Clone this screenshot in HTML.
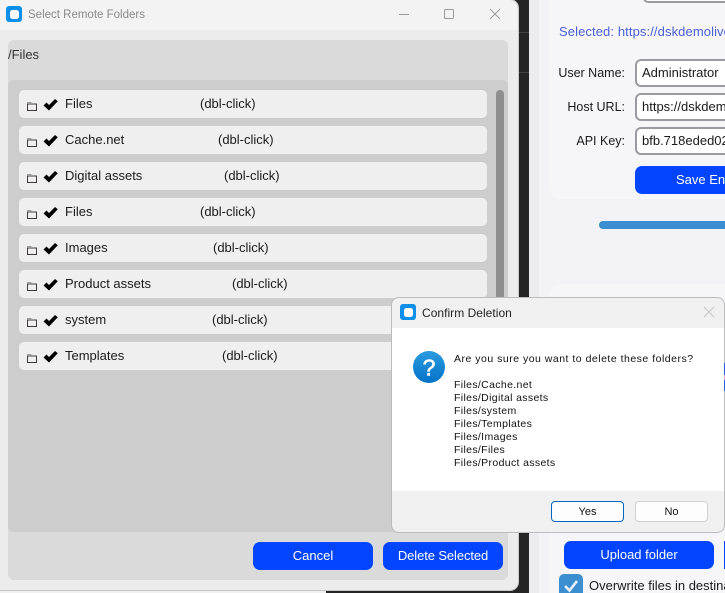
<!DOCTYPE html>
<html><head><meta charset="utf-8">
<style>
html,body{margin:0;padding:0;width:725px;height:593px;overflow:hidden;background:#252525;font-family:"Liberation Sans",sans-serif;font-size:13px;color:#1a1a1a}
#root{position:absolute;left:0;top:0;width:725px;height:593px;overflow:hidden;background:#252525}
#root div,#root span,#root svg{position:absolute;box-sizing:border-box}
.t{white-space:nowrap;line-height:16px}
.row{left:19px;width:468px;height:28px;background:#efefef;border-radius:5px}
.row .n{left:46px;top:6px}
.row .d{top:6px}
.row svg.f{left:8px;top:11px}
.row svg.c{left:24px;top:9px}
.blue{background:#0345ff;border-radius:7px;color:#fff;text-align:center;font-size:13px}
.inp{left:635px;width:100px;height:28px;background:#fff;border:2px solid #9a9ba0;border-radius:6px;padding:4px 5px;font-size:13px;line-height:15px;white-space:nowrap;overflow:hidden}
.lab{width:100px;left:525px;text-align:right;font-size:12.5px;line-height:16px}
.dl{left:454px;font-size:10.5px;line-height:13px;white-space:nowrap;color:#111}
</style></head><body>
<div id="root">

<!-- dark strip hairlines -->
<div style="left:518px;top:32px;width:11px;height:1px;background:#444"></div>
<div style="left:518px;top:72px;width:11px;height:1px;background:#444"></div>

<!-- right background window -->
<div style="left:529px;top:0;width:196px;height:593px;background:#ececf0"></div>
<div style="left:539px;top:0;width:186px;height:593px;background:#f2f2f7"></div>
<div style="left:549px;top:-10px;width:190px;height:209px;background:#f6f6f9;border-radius:12px"></div>
<div style="left:549px;top:284px;width:190px;height:320px;background:#f6f6f9;border-radius:12px"></div>
<div style="left:643px;top:-10px;width:100px;height:13px;background:#fff;border:2px solid #9a9ba0;border-radius:5px"></div>
<div class="t" style="left:559px;top:24px;color:#4a5fd8;font-size:13px;letter-spacing:.1px">Selected: https://dskdemolive</div>
<div class="lab" style="top:65px">User Name:</div>
<div class="lab" style="top:99px">Host URL:</div>
<div class="lab" style="top:133px">API Key:</div>
<div class="inp" style="top:59px">Administrator</div>
<div class="inp" style="top:93px">https://dskdemo</div>
<div class="inp" style="top:127px">bfb.718eded02</div>
<div class="blue" style="left:635px;top:166px;width:110px;height:28px;line-height:28px;padding-left:41px;text-align:left;white-space:nowrap">Save Env</div>
<div style="left:599px;top:221px;width:140px;height:8px;background:#3b8ed0;border-radius:4px"></div>
<div class="blue" style="left:564px;top:541px;width:150px;height:28px;line-height:27px">Upload folder</div>
<div style="left:724px;top:541px;width:1px;height:28px;background:#0345ff"></div>
<div style="left:559px;top:574px;width:24px;height:24px;background:#3b8ed0;border-radius:5px"></div>
<svg style="left:559px;top:574px" width="24" height="19"><path d="M6 12l4.500 4.500L18 7" fill="none" stroke="#e8f1f9" stroke-width="2.600"/></svg>
<div class="t" style="left:589px;top:578px;font-size:13px">Overwrite files in destina</div>

<!-- left window -->
<div style="left:0;top:590px;width:326px;height:3px;background:#f0f0f0"></div>
<div style="left:-2px;top:-1px;width:520.500px;height:592px;background:#ececec;border-radius:0 9px 9px 0;border:1px solid #c8c8c8"></div>
<div style="left:0;top:0;width:517px;height:30px;background:#f3f3f3;border-radius:0 9px 0 0"></div>
<svg style="left:6px;top:6px" width="16" height="16"><rect width="16" height="16" rx="3" fill="#0b8fe8"/><rect x="4" y="4" width="9" height="9" rx="2.500" fill="#fff"/></svg>
<div class="t" style="left:28px;top:7px;font-size:11.5px;color:#8a8a8a">Select Remote Folders</div>
<svg style="left:395px;top:4px" width="115" height="22" fill="none" stroke="#9a9a9a"><path d="M4 10.500h10"/><rect x="49.500" y="5.500" width="9" height="9" rx="1"/><path d="M95 5l10 10M105 5l-10 10"/></svg>

<div style="left:8px;top:40px;width:500px;height:540px;background:#dadada;border-radius:6px"></div>
<div class="t" style="left:8px;top:47px;font-size:13px;color:#333">/Files</div>
<div style="left:8px;top:80px;width:500px;height:452px;background:#cdcdcd;border-radius:6px"></div>
<div style="left:496px;top:90px;width:8px;height:300px;background:#8e8e8e;border-radius:4px"></div>

<div class="row" style="top:90px"><svg class="f" width="10" height="10" fill="none"><path d="M.5 3V9.500H9.500V3Z" stroke="#3f3a3a"/><path d="M.5 3V1.500H4V3" stroke="#9a9a9a"/></svg><svg class="c" width="15" height="12"><path d="M.5 6.500L3.500 3.500L6 6L12 0L14.800 2.200L6 11.500Z" fill="#000"/></svg><span class="t n">Files</span><span class="t d" style="left:181px">(dbl-click)</span></div>
<div class="row" style="top:126px"><svg class="f" width="10" height="10" fill="none"><path d="M.5 3V9.500H9.500V3Z" stroke="#3f3a3a"/><path d="M.5 3V1.500H4V3" stroke="#9a9a9a"/></svg><svg class="c" width="15" height="12"><path d="M.5 6.500L3.500 3.500L6 6L12 0L14.800 2.200L6 11.500Z" fill="#000"/></svg><span class="t n">Cache.net</span><span class="t d" style="left:199px">(dbl-click)</span></div>
<div class="row" style="top:162px"><svg class="f" width="10" height="10" fill="none"><path d="M.5 3V9.500H9.500V3Z" stroke="#3f3a3a"/><path d="M.5 3V1.500H4V3" stroke="#9a9a9a"/></svg><svg class="c" width="15" height="12"><path d="M.5 6.500L3.500 3.500L6 6L12 0L14.800 2.200L6 11.500Z" fill="#000"/></svg><span class="t n">Digital assets</span><span class="t d" style="left:205px">(dbl-click)</span></div>
<div class="row" style="top:198px"><svg class="f" width="10" height="10" fill="none"><path d="M.5 3V9.500H9.500V3Z" stroke="#3f3a3a"/><path d="M.5 3V1.500H4V3" stroke="#9a9a9a"/></svg><svg class="c" width="15" height="12"><path d="M.5 6.500L3.500 3.500L6 6L12 0L14.800 2.200L6 11.500Z" fill="#000"/></svg><span class="t n">Files</span><span class="t d" style="left:181px">(dbl-click)</span></div>
<div class="row" style="top:234px"><svg class="f" width="10" height="10" fill="none"><path d="M.5 3V9.500H9.500V3Z" stroke="#3f3a3a"/><path d="M.5 3V1.500H4V3" stroke="#9a9a9a"/></svg><svg class="c" width="15" height="12"><path d="M.5 6.500L3.500 3.500L6 6L12 0L14.800 2.200L6 11.500Z" fill="#000"/></svg><span class="t n">Images</span><span class="t d" style="left:194px">(dbl-click)</span></div>
<div class="row" style="top:270px"><svg class="f" width="10" height="10" fill="none"><path d="M.5 3V9.500H9.500V3Z" stroke="#3f3a3a"/><path d="M.5 3V1.500H4V3" stroke="#9a9a9a"/></svg><svg class="c" width="15" height="12"><path d="M.5 6.500L3.500 3.500L6 6L12 0L14.800 2.200L6 11.500Z" fill="#000"/></svg><span class="t n">Product assets</span><span class="t d" style="left:213px">(dbl-click)</span></div>
<div class="row" style="top:306px"><svg class="f" width="10" height="10" fill="none"><path d="M.5 3V9.500H9.500V3Z" stroke="#3f3a3a"/><path d="M.5 3V1.500H4V3" stroke="#9a9a9a"/></svg><svg class="c" width="15" height="12"><path d="M.5 6.500L3.500 3.500L6 6L12 0L14.800 2.200L6 11.500Z" fill="#000"/></svg><span class="t n">system</span><span class="t d" style="left:193px">(dbl-click)</span></div>
<div class="row" style="top:342px"><svg class="f" width="10" height="10" fill="none"><path d="M.5 3V9.500H9.500V3Z" stroke="#3f3a3a"/><path d="M.5 3V1.500H4V3" stroke="#9a9a9a"/></svg><svg class="c" width="15" height="12"><path d="M.5 6.500L3.500 3.500L6 6L12 0L14.800 2.200L6 11.500Z" fill="#000"/></svg><span class="t n">Templates</span><span class="t d" style="left:203px">(dbl-click)</span></div>

<div class="blue" style="left:253px;top:542px;width:120px;height:28px;line-height:28px">Cancel</div>
<div class="blue" style="left:383px;top:542px;width:120px;height:28px;line-height:28px;letter-spacing:-.1px">Delete Selected</div>

<!-- dialog -->
<div style="left:391px;top:297px;width:334px;height:236px;background:#f0f0f0;border:1px solid #bcbcbc;border-radius:8px"></div>
<div style="left:392px;top:328px;width:332px;height:163px;background:#fff"></div>
<div style="left:724px;top:363px;width:1px;height:12px;background:#2a63d8"></div>
<div style="left:724px;top:375px;width:1px;height:5px;background:#d8a8c8"></div>
<div style="left:724px;top:380px;width:1px;height:11px;background:#2a63d8"></div>
<svg style="left:400px;top:304px" width="16" height="16"><rect width="16" height="16" rx="3" fill="#0b8fe8"/><rect x="4" y="4" width="9" height="9" rx="2.500" fill="#fff"/></svg>
<div class="t" style="left:422px;top:305px;font-size:12px;letter-spacing:.03px;color:#222">Confirm Deletion</div>
<svg style="left:703px;top:306px" width="12" height="12" fill="none" stroke="#c4c4c4" stroke-width="1.100"><path d="M1 1l10 10M11 1L1 11"/></svg>
<svg style="left:413px;top:351px" width="32" height="32"><defs><linearGradient id="g" x1="0" y1="0" x2="0" y2="1"><stop offset="0" stop-color="#2a9ce0"/><stop offset="1" stop-color="#0472c8"/></linearGradient></defs><circle cx="16" cy="16" r="16" fill="url(#g)"/><text x="16" y="24.500" text-anchor="middle" font-family="Liberation Sans" font-size="23" fill="#fff" stroke="#fff" stroke-width=".6">?</text></svg>
<div class="dl" style="top:353px;letter-spacing:.5px">Are you sure you want to delete these folders?</div>
<div class="dl" style="top:379px;letter-spacing:.35px">Files/Cache.net<br>Files/Digital assets<br>Files/system<br>Files/Templates<br>Files/Images<br>Files/Files<br>Files/Product assets</div>
<div style="left:551px;top:501px;width:73px;height:21px;background:#fdfdfd;border:1px solid #0067c0;border-radius:4px;text-align:center;font-size:11px;line-height:20px;color:#111">Yes</div>
<div style="left:635px;top:501px;width:73px;height:21px;background:#fdfdfd;border:1px solid #d0d0d0;border-radius:4px;text-align:center;font-size:11px;line-height:20px;color:#111">No</div>
</div>
</body></html>
